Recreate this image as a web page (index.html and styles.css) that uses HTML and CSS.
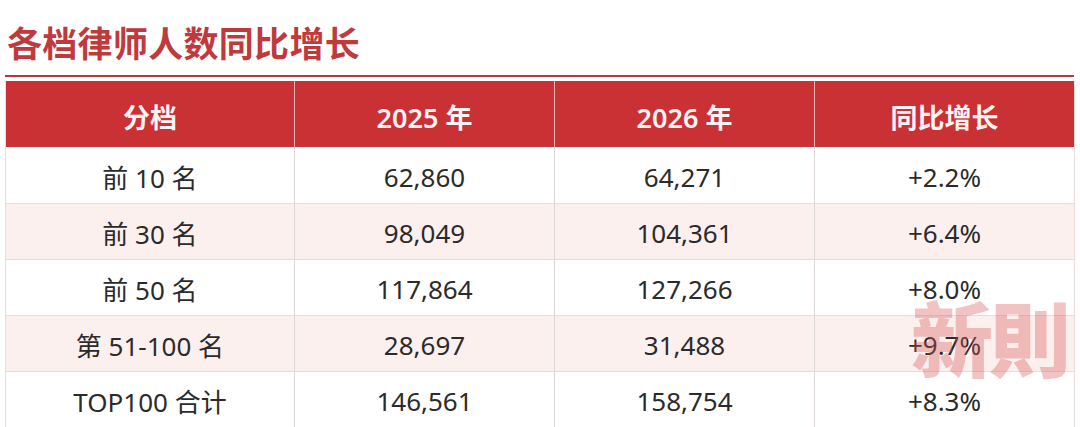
FILE: index.html
```html
<!DOCTYPE html>
<html lang="zh-CN">
<head>
<meta charset="utf-8">
<title>各档律师人数同比增长</title>
<link rel="stylesheet" href="styles.css">
</head>
<body>
<div class="page">
  <h1 class="title">各档律师人数同比增长</h1>
  <div class="rule"></div>
  <div class="table-wrap">
    <table class="data">
      <colgroup>
        <col class="c1"><col class="c2"><col class="c3"><col class="c4">
      </colgroup>
      <thead>
        <tr><th>分档</th><th>2025 年</th><th>2026 年</th><th>同比增长</th></tr>
      </thead>
      <tbody>
        <tr><td>前 10 名</td><td>62,860</td><td>64,271</td><td>+2.2%</td></tr>
        <tr class="alt"><td>前 30 名</td><td>98,049</td><td>104,361</td><td>+6.4%</td></tr>
        <tr><td>前 50 名</td><td>117,864</td><td>127,266</td><td>+8.0%</td></tr>
        <tr class="alt"><td>第 51-100 名</td><td>28,697</td><td>31,488</td><td>+9.7%</td></tr>
        <tr><td>TOP100 合计</td><td>146,561</td><td>158,754</td><td>+8.3%</td></tr>
      </tbody>
    </table>
    <div class="watermark">新則</div>
  </div>
</div>
</body>
</html>
```

FILE: styles.css
```css
html, body {
  margin: 0;
  padding: 0;
  background: #ffffff;
}
body {
  font-family: "Noto Sans", "Noto Sans CJK SC", sans-serif;
  color: #2b2b2b;
  overflow: hidden;
}
.page {
  width: 1080px;
  height: 427px;
  padding: 22px 6px 0 5px;
  box-sizing: border-box;
}
.title {
  margin: 0 0 13px 2px;
  font-family: "Noto Sans CJK SC", sans-serif;
  font-size: 35px;
  line-height: 40px;
  font-weight: 700;
  color: #c0393d;
  letter-spacing: 0.3px;
}
.rule {
  height: 2px;
  background: #b8373b;
  margin-bottom: 4px;
}
.table-wrap {
  position: relative;
}
.data {
  width: 1069px;
  border-collapse: collapse;
  table-layout: fixed;
  border-left: 1px solid #f0dcdc;
  border-right: 1px solid #f0dcdc;
}
.c1 { width: 289px; }
.c2 { width: 260px; }
.c3 { width: 260px; }
.c4 { width: 260px; }
.data th {
  height: 66px;
  padding: 4px 0 0;
  background: #ca3134;
  color: #fbf3f3;
  font-family: "Noto Sans", "Noto Sans CJK SC", sans-serif;
  font-size: 27px;
  font-weight: 600;
  text-align: center;
  border-left: 1px solid #eab4b4;
  box-sizing: border-box;
}
.data th:first-child { border-left: none; }
.data td {
  height: 56px;
  padding: 4px 0 0;
  font-size: 26px;
  text-align: center;
  border-left: 1px solid #dcd6d6;
  border-bottom: 1px solid #e6dcdc;
  box-sizing: border-box;
}
.data td:first-child { border-left: none; }
.data tr.alt td { background: #fcf0ef; }
.watermark {
  position: absolute;
  left: 906px;
  top: 214px;
  font-family: "Noto Sans CJK TC", "Noto Sans CJK SC", sans-serif;
  font-size: 82px;
  font-weight: 900;
  line-height: 1;
  letter-spacing: -4px;
  color: rgba(214, 80, 80, 0.34);
  pointer-events: none;
}
```
